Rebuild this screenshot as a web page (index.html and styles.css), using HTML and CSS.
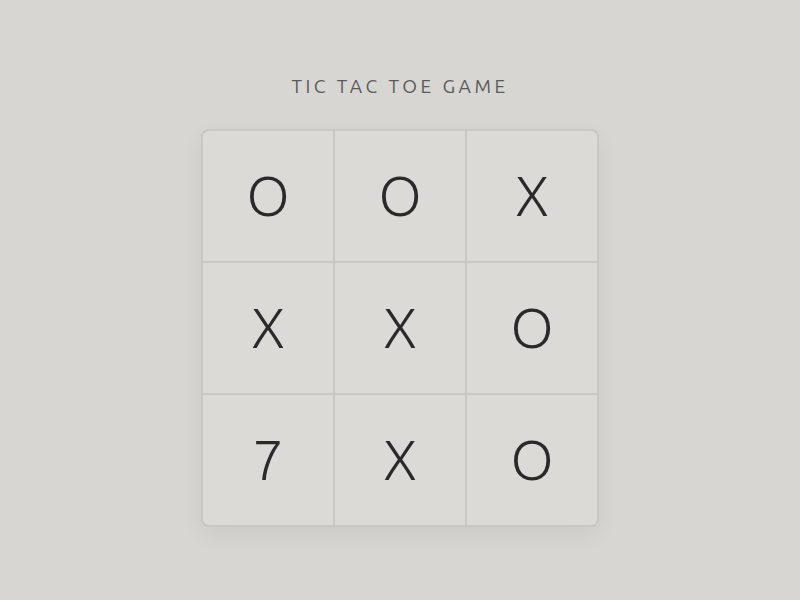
FILE: index.html
```html
<!DOCTYPE html>
<html lang="en">
<head>
    <meta charset="UTF-8">
    <meta name="viewport" content="width=device-width, initial-scale=1.0">
    <title>Tic Tac Toe Game</title>
    <link rel="stylesheet" href="styles.css">
</head>
<body>
    <main class="game">
        <h1 class="title">Tic Tac Toe Game</h1>
        <div class="board">
            <div class="cell">O</div>
            <div class="cell">O</div>
            <div class="cell">X</div>
            <div class="cell">X</div>
            <div class="cell">X</div>
            <div class="cell">O</div>
            <div class="cell">7</div>
            <div class="cell">X</div>
            <div class="cell">O</div>
        </div>
    </main>
</body>
</html>
```

FILE: styles.css
```css
body {
    font-family: Ubuntu, "Open Sans", sans-serif;
    margin: 0;
    padding: 0;
    background-color: #d8d6d2;
    color: #2a2a2a;
}
.game {
    display: flex;
    flex-direction: column;
    align-items: center;
    padding: 73px 0 60px;
}
.title {
    margin: 0 0 30px;
    font-size: 19px;
    font-weight: 400;
    line-height: 26px;
    letter-spacing: 3.5px;
    text-transform: uppercase;
    color: #5a5a5a;
}
.board {
    display: grid;
    grid-template-columns: repeat(3, 130px);
    grid-template-rows: repeat(3, 130px);
    gap: 2px;
    background-color: #c9c7c3;
    border: 2px solid #c9c7c3;
    border-radius: 8px;
    overflow: hidden;
    box-shadow: 0 8px 24px rgba(0,0,0,0.06);
}
.cell {
    display: flex;
    align-items: center;
    justify-content: center;
    background-color: #dcdad6;
    font-size: 56px;
    font-weight: 300;
    line-height: 1;
}
```
